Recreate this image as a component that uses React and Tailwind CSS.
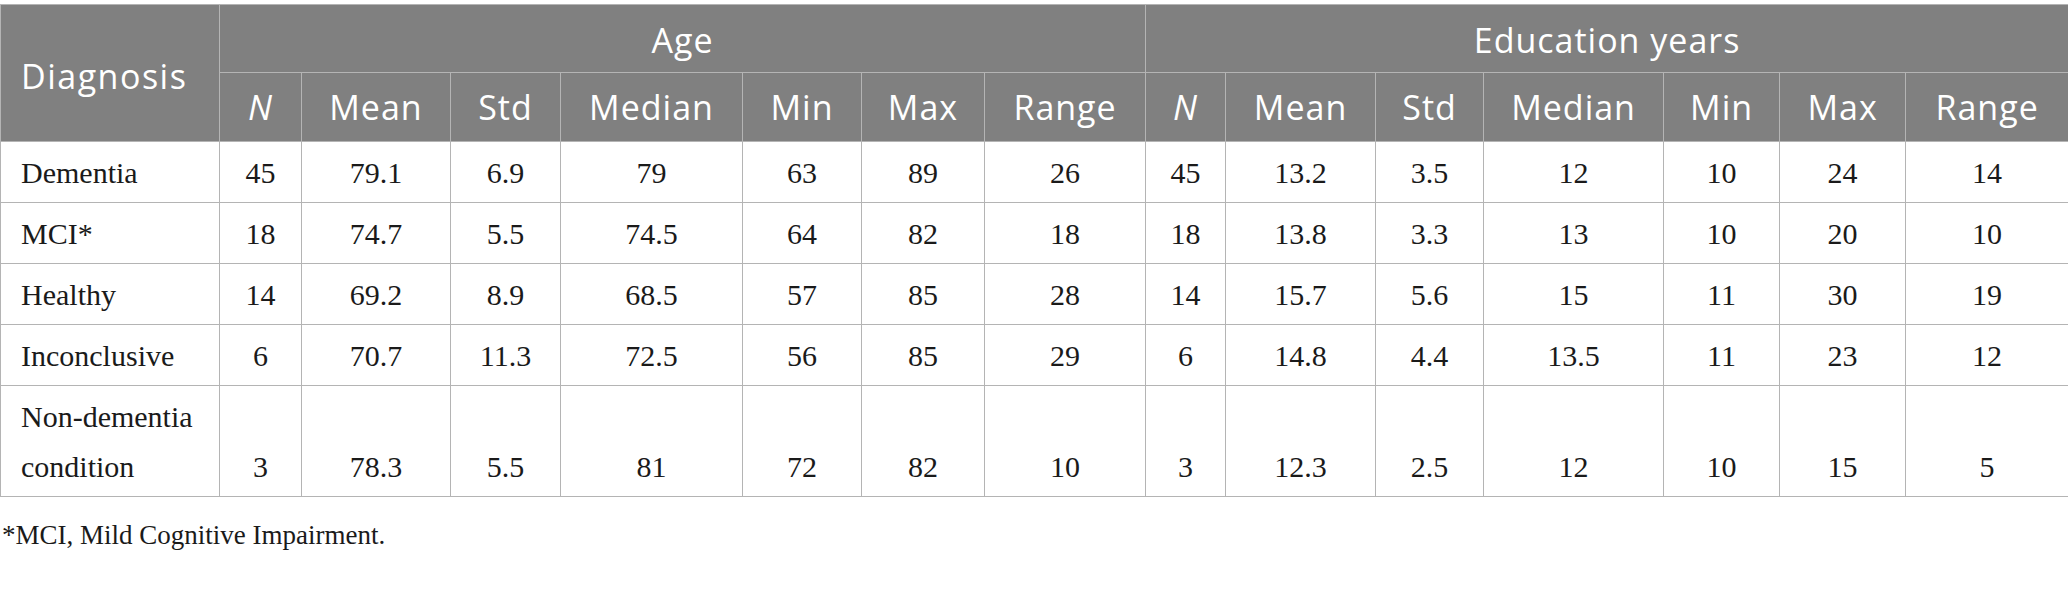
const widths = [219, 82, 149, 110, 182, 119, 123, 161, 80, 150, 108, 180, 116, 126, 163];

const stats = ['N', 'Mean', 'Std', 'Median', 'Min', 'Max', 'Range'];

const rows = [
  { label: 'Dementia', age: ['45', '79.1', '6.9', '79', '63', '89', '26'], edu: ['45', '13.2', '3.5', '12', '10', '24', '14'] },
  { label: 'MCI*', age: ['18', '74.7', '5.5', '74.5', '64', '82', '18'], edu: ['18', '13.8', '3.3', '13', '10', '20', '10'] },
  { label: 'Healthy', age: ['14', '69.2', '8.9', '68.5', '57', '85', '28'], edu: ['14', '15.7', '5.6', '15', '11', '30', '19'] },
  { label: 'Inconclusive', age: ['6', '70.7', '11.3', '72.5', '56', '85', '29'], edu: ['6', '14.8', '4.4', '13.5', '11', '23', '12'] },
  { label: ['Non-dementia', 'condition'], age: ['3', '78.3', '5.5', '81', '72', '82', '10'], edu: ['3', '12.3', '2.5', '12', '10', '15', '5'] },
];

function HeadCell({ children, top, ...props }) {
  return (
    <th
      {...props}
      className={`border border-[#b4b4b4] bg-[#808080] p-0 text-center align-middle font-normal text-white ${top ? 'pt-[4px]' : ''}`}
    >
      {children}
    </th>
  );
}

export default function App() {
  return (
    <div className="w-[2068px] bg-white pt-[4px]">
      <table className="w-[2068px] table-fixed border-collapse font-['Open_Sans',sans-serif] text-[34px] tracking-[1px]">
        <colgroup>
          {widths.map((w, i) => (
            <col key={i} style={{ width: w }} />
          ))}
        </colgroup>
        <thead>
          <tr className="h-[68px]">
            <th
              rowSpan={2}
              className="border border-[#b4b4b4] bg-[#808080] pl-[20px] pt-[6px] text-left align-middle font-normal tracking-[1.5px] text-white"
            >
              Diagnosis
            </th>
            <HeadCell colSpan={7} top>
              Age
            </HeadCell>
            <HeadCell colSpan={7} top>
              Education years
            </HeadCell>
          </tr>
          <tr className="h-[69px]">
            {[...stats, ...stats].map((s, i) => (
              <HeadCell key={i}>
                <span className={s === 'N' ? 'italic' : ''}>{s}</span>
              </HeadCell>
            ))}
          </tr>
        </thead>
        <tbody className="font-['Liberation_Serif',serif] text-[30px] leading-[50px] tracking-normal text-[#1a1a1a]">
          {rows.map((r, i) => (
            <tr key={i}>
              <td className="border border-[#b4b4b4] pb-[4px] pl-[20px] pt-[6px] text-left align-bottom">
                {Array.isArray(r.label) ? (
                  <>
                    {r.label[0]}
                    <br />
                    {r.label[1]}
                  </>
                ) : (
                  r.label
                )}
              </td>
              {[...r.age, ...r.edu].map((v, j) => (
                <td key={j} className="border border-[#b4b4b4] pb-[4px] pt-[6px] text-center align-bottom">
                  {v}
                </td>
              ))}
            </tr>
          ))}
        </tbody>
      </table>
      <p className="mt-[20px] pl-[2px] font-['Liberation_Serif',serif] text-[27px] leading-[36px] text-[#1a1a1a]">
        *MCI, Mild Cognitive Impairment.
      </p>
    </div>
  );
}
